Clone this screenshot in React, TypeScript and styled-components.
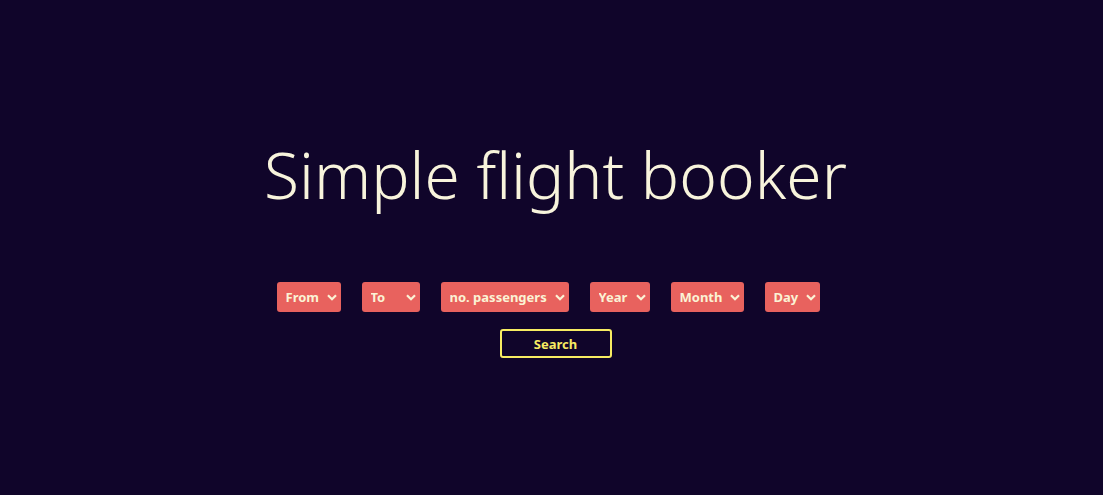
import React from 'react';
import styled, { createGlobalStyle } from 'styled-components';

const GlobalStyle = createGlobalStyle`
  html, body {
    margin: 0;
    padding: 0;
    background: #10052a;
  }
  body {
    font-family: 'Noto Sans', 'Open Sans', sans-serif;
  }
`;

const chevron =
  "url(\"data:image/svg+xml;utf8,<svg xmlns='http://www.w3.org/2000/svg' width='10' height='7' viewBox='0 0 10 7'><path d='M1 1.2 L5 5.2 L9 1.2' fill='none' stroke='%23fbf3d5' stroke-width='2.2'/></svg>\")";

const fields = [
  { label: 'From', width: 64, options: ['London', 'Paris', 'Berlin'] },
  { label: 'To', width: 58, options: ['London', 'Paris', 'Berlin'] },
  { label: 'no. passengers', width: 128, options: ['1', '2', '3', '4'] },
  { label: 'Year', width: 60, options: ['2024', '2025'] },
  { label: 'Month', width: 73, options: ['1', '2', '3'] },
  { label: 'Day', width: 55, options: ['1', '2', '3'] },
];

const App = () => {
  return (
    <Page>
      <GlobalStyle />
      <Title>Simple flight booker</Title>
      <Form onSubmit={(e) => e.preventDefault()}>
        <Row>
          {fields.map((f) => (
            <Select key={f.label} $width={f.width} defaultValue="">
              <option value="" disabled>
                {f.label}
              </option>
              {f.options.map((o) => (
                <option key={o} value={o}>
                  {o}
                </option>
              ))}
            </Select>
          ))}
        </Row>
        <SearchButton type="submit">Search</SearchButton>
      </Form>
    </Page>
  );
};

const Page = styled.div`
  height: 495px;
  background: #10052a;
  display: flex;
  flex-direction: column;
  align-items: center;
  padding-top: 127px;
  box-sizing: border-box;
`;

const Title = styled.h1`
  margin: 0 0 0 8px;
  font-family: 'Noto Sans', sans-serif;
  font-weight: 300;
  font-size: 64px;
  line-height: 96px;
  color: #f8f4dc;
`;

const Form = styled.form`
  margin-top: 59px;
  display: flex;
  flex-direction: column;
  align-items: center;
  gap: 17px;
`;

const Row = styled.div`
  display: flex;
  gap: 21px;
  margin-right: 7px;
`;

const Select = styled.select<{ $width: number }>`
  appearance: none;
  -webkit-appearance: none;
  width: ${({ $width }) => $width}px;
  height: 30px;
  padding: 0 0 0 9px;
  border: none;
  border-radius: 3px;
  background: #e8625e ${chevron} no-repeat right 4px center;
  color: #fbf3d5;
  font-family: 'Noto Sans', sans-serif;
  font-weight: 700;
  font-size: 13px;
  outline: none;
  cursor: pointer;
`;

const SearchButton = styled.button`
  width: 112px;
  height: 29px;
  margin-left: 8px;
  background: transparent;
  border: 2px solid #f7ec62;
  border-radius: 3px;
  color: #f7ec62;
  font-family: 'Noto Sans', sans-serif;
  font-weight: 700;
  font-size: 13px;
  cursor: pointer;
`;

export default App;
